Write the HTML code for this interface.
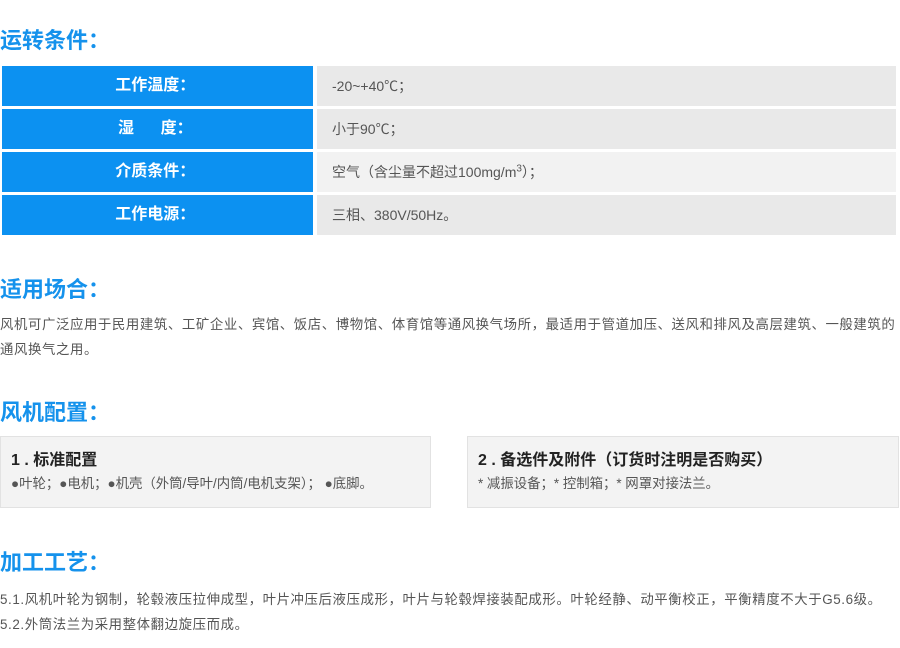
<!DOCTYPE html>
<html><head><meta charset="utf-8"><style>
*{margin:0;padding:0;box-sizing:border-box}
body{width:900px;height:648px;background:#fff;font-family:"Liberation Sans","Noto Sans CJK SC",sans-serif;color:#444;position:relative;overflow:hidden}
.h{position:absolute;left:0;font-size:22px;font-weight:bold;color:#1592ec;line-height:28px}
.l{position:absolute;left:2px;width:311px;height:40px;background:#0c91f1;color:#fff;font-weight:bold;font-size:16px;text-align:center;line-height:40px}
.r{position:absolute;left:317px;width:579px;height:40px;background:#e9e9e9;font-size:14px;line-height:40px;padding-left:15px;color:#555}
.p{position:absolute;left:0;font-size:13.4px;line-height:25px;color:#555;letter-spacing:0.6px;white-space:nowrap}
.box{position:absolute;top:436px;height:72px;background:#f3f3f3;border:1px solid #e2e2e2;padding:13px 0 0 10px}
.box b{display:block;font-size:16px;color:#222;line-height:22px}
.box span{display:block;font-size:13.4px;color:#555;line-height:24px}
</style></head><body>
<div class="h" style="top:27px">运转条件：</div>
<div class="l" style="top:66px">工作温度：&nbsp;</div><div class="r" style="top:66px">-20~+40℃；</div>
<div class="l" style="top:109px">湿&nbsp;&nbsp;&nbsp;&nbsp;&nbsp;&nbsp;度：&nbsp;</div><div class="r" style="top:109px">小于90℃；</div>
<div class="l" style="top:152px">介质条件：&nbsp;</div><div class="r" style="top:152px;background:#f2f2f2">空气（含尘量不超过100mg/m<sup style="font-size:10px;line-height:0">3</sup>）；</div>
<div class="l" style="top:195px">工作电源：&nbsp;</div><div class="r" style="top:195px">三相、380V/50Hz。</div>
<div class="h" style="top:276px">适用场合：</div>
<div class="p" style="top:312px;width:900px">风机可广泛应用于民用建筑、工矿企业、宾馆、饭店、博物馆、体育馆等通风换气场所，最适用于管道加压、送风和排风及高层建筑、一般建筑的<br>通风换气之用。</div>
<div class="h" style="top:399px">风机配置：</div>
<div class="box" style="left:0;width:431px"><b>1 . 标准配置</b><span>●叶轮；●电机；●机壳（外筒/导叶/内筒/电机支架）； ●底脚。</span></div>
<div class="box" style="left:467px;width:432px"><b>2 . 备选件及附件（订货时注明是否购买）</b><span>* 减振设备；* 控制箱；* 网罩对接法兰。</span></div>
<div class="h" style="top:549px">加工工艺：</div>
<div class="p" style="top:587px">5.1.风机叶轮为钢制，轮毂液压拉伸成型，叶片冲压后液压成形，叶片与轮毂焊接装配成形。叶轮经静、动平衡校正，平衡精度不大于G5.6级。</div>
<div class="p" style="top:612px">5.2.外筒法兰为采用整体翻边旋压而成。</div>
</body></html>
